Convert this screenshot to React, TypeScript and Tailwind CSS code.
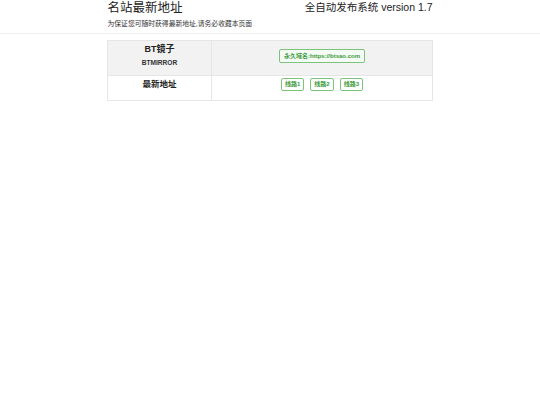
export default function App() {
  const lines = ['线路1', '线路2', '线路3'];

  return (
    <div className="min-h-[405px] bg-white text-[#333] font-['Liberation_Sans','Noto_Sans_CJK_SC',sans-serif]">
      {/* Header */}
      <div className="border-b border-[#eee] h-[34px]">
        <div className="w-[325px] mx-auto flex justify-between">
          <div>
            <h1 className="text-[12.5px] leading-[14px] text-[#222] pt-px">名站最新地址</h1>
            <p className="text-[6.8px] leading-[8px] mt-[5px] text-[#333]">为保证您可随时获得最新地址,请务必收藏本页面</p>
          </div>
          <h2 className="text-[10.5px] leading-[14px] text-[#222] mt-0">全自动发布系统 version 1.7</h2>
        </div>
      </div>

      {/* Table */}
      <div className="w-[326px] mx-auto mt-[6px] border border-[#e6e6e6]">
        <div className="flex bg-[#f2f2f2] h-[35px] border-b border-[#e6e6e6]">
          <div className="w-[104px] border-r border-[#e6e6e6] flex flex-col items-center pt-[3px]">
            <span className="text-[9px] leading-[11px] font-bold text-[#222]">BT镜子</span>
            <span className="text-[6.6px] leading-[8px] font-bold text-[#333] mt-[4px]">BTMIRROR</span>
          </div>
          <div className="flex-1 flex justify-center pt-[8px]">
            <span className="h-[14px] px-[4px] border border-[#7cc47c] rounded-[2px] text-[6px] leading-[12px] font-bold text-[#3c9a3c] bg-[#f5fbf5]">
              永久域名:https://btsao.com
            </span>
          </div>
        </div>
        <div className="flex h-[24px]">
          <div className="w-[104px] border-r border-[#e6e6e6] flex justify-center pt-[3px]">
            <span className="text-[8.5px] leading-[11px] font-bold text-[#222]">最新地址</span>
          </div>
          <div className="flex-1 flex justify-center gap-[6px] pt-[2px]">
            {lines.map((l) => (
              <span
                key={l}
                className="h-[13px] px-[3px] border border-[#7cc47c] rounded-[2px] text-[6px] leading-[11px] font-bold text-[#3c9a3c]"
              >
                {l}
              </span>
            ))}
          </div>
        </div>
      </div>
    </div>
  );
}
